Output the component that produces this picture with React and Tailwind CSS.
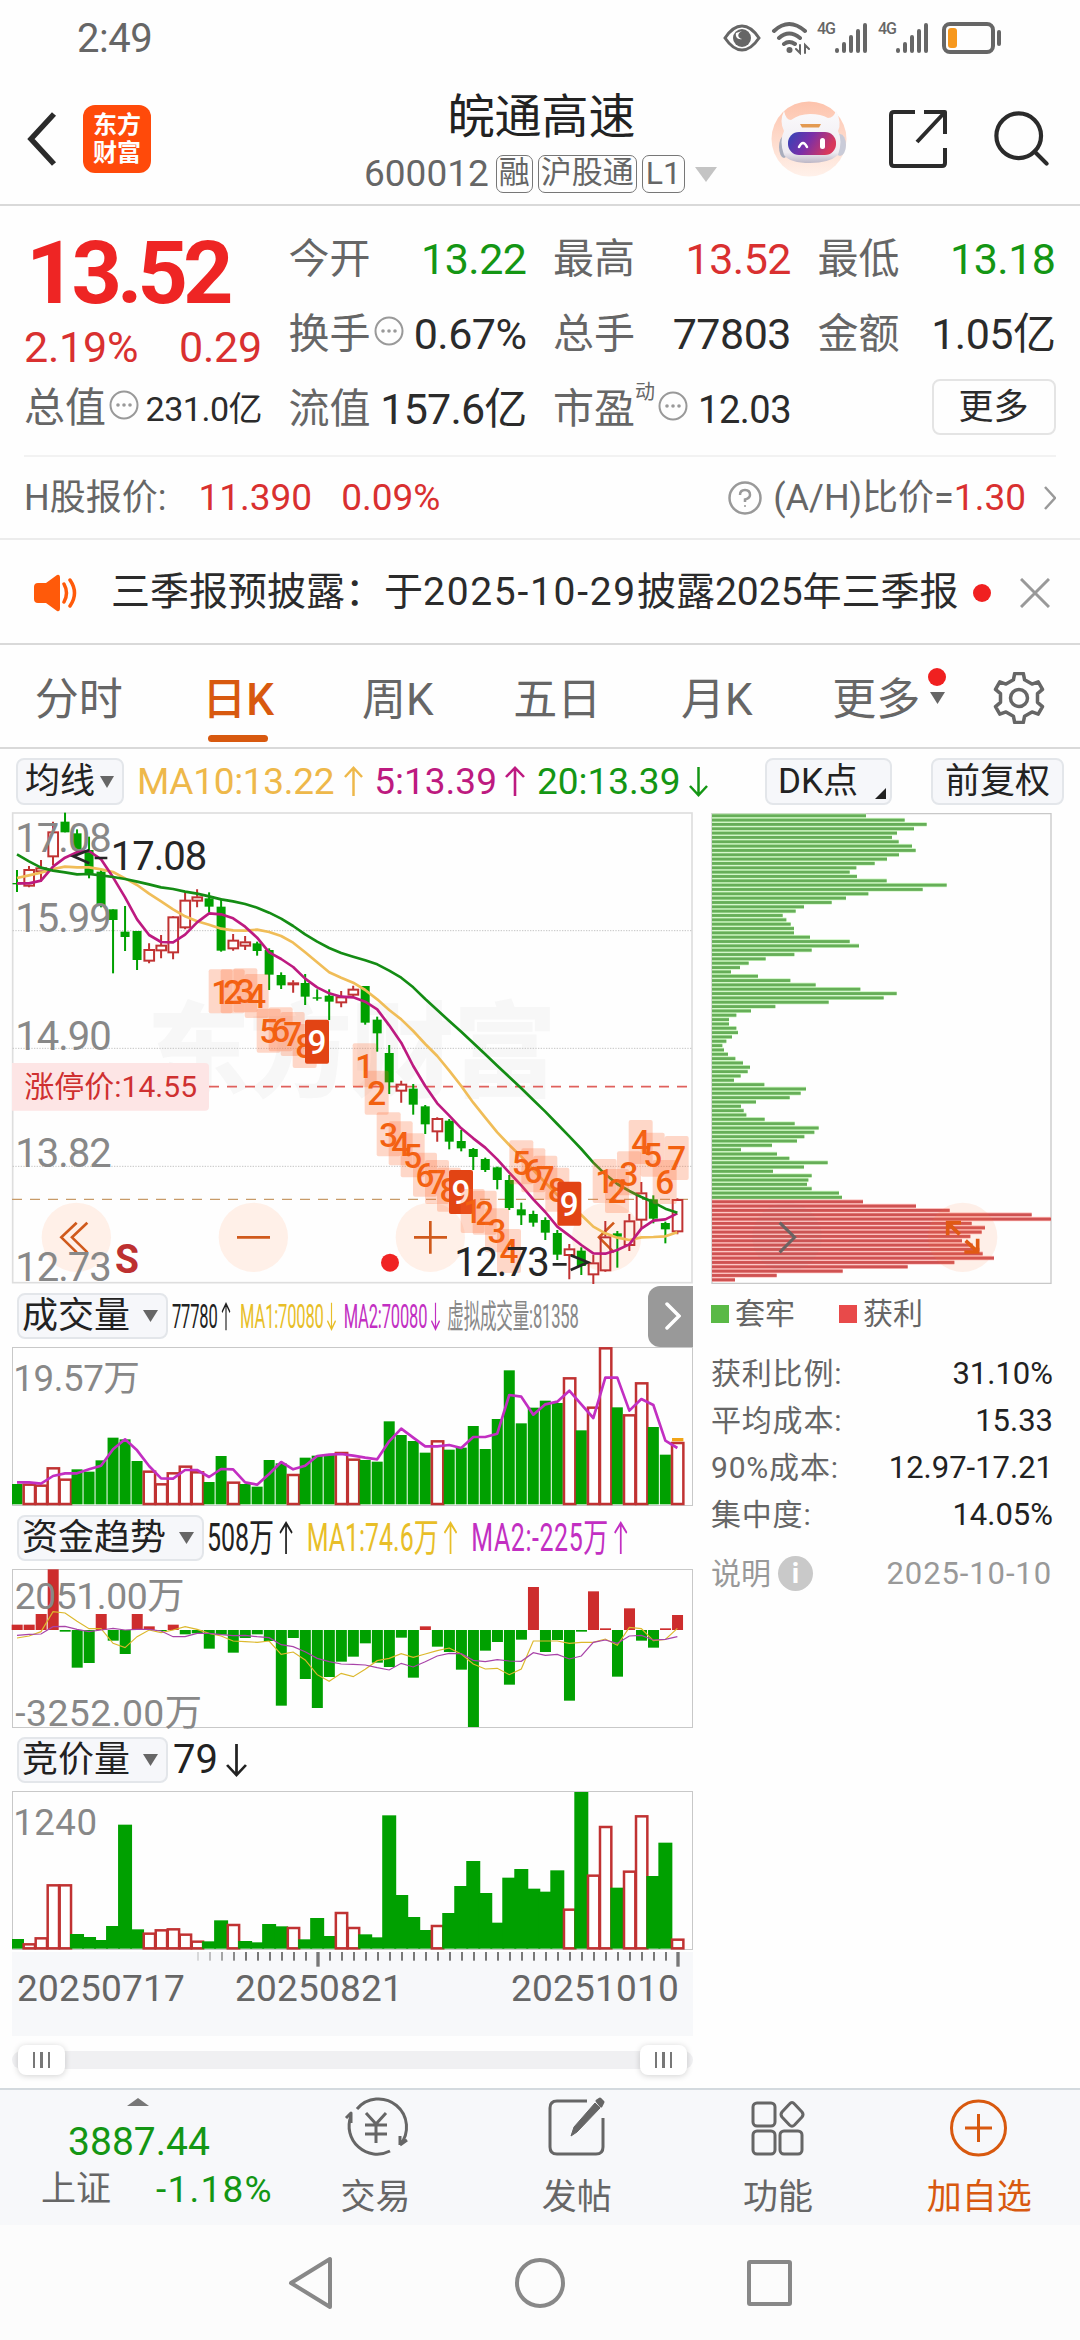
import { Search } from 'lucide-react'

const UP = '#c03232'
const DOWN = '#00a000'

// Chart units are a third of a pixel. One bar every 36 units, first at x = 51.
const barX = i => 51 + i * 36.02

// [direction, high, body top, body bottom, low]
const CANDLES = [
  ['g', 210, 249, 253, 276], ['r', 198, 208, 258, 262], ['r', 180, 203, 215, 245], ['r', 65, 95, 170, 195],
  ['g', 38, 65, 97, 97], ['g', 88, 100, 148, 160], ['g', 110, 150, 225, 235], ['g', 210, 215, 318, 322],
  ['g', 328, 328, 360, 520], ['g', 318, 395, 411, 453], ['g', 393, 393, 480, 510], ['r', 430, 448, 483, 490],
  ['r', 405, 435, 452, 475], ['r', 348, 350, 458, 478], ['r', 277, 300, 383, 388], ['r', 268, 290, 303, 322],
  ['g', 277, 295, 320, 338], ['g', 295, 320, 452, 455], ['r', 402, 420, 446, 452], ['r', 408, 425, 438, 450],
  ['g', 425, 430, 453, 467], ['g', 445, 450, 524, 570], ['g', 517, 525, 556, 567], ['r', 541, 548, 554, 578],
  ['g', 522, 549, 590, 615], ['g', 568, 592, 596, 602], ['g', 568, 587, 605, 660], ['r', 573, 590, 608, 622],
  ['r', 557, 567, 585, 590], ['g', 558, 558, 668, 674], ['g', 650, 659, 700, 755], ['g', 735, 759, 847, 882],
  ['r', 842, 852, 873, 908], ['g', 852, 866, 914, 944], ['g', 915, 919, 973, 1002], ['r', 952, 955, 995, 1025],
  ['g', 957, 962, 1025, 1048], ['g', 990, 1023, 1045, 1054], ['g', 1044, 1047, 1071, 1110], ['g', 1073, 1077, 1110, 1116],
  ['g', 1100, 1102, 1140, 1168], ['g', 1125, 1140, 1224, 1230], ['g', 1208, 1228, 1246, 1275], ['g', 1232, 1242, 1268, 1280],
  ['g', 1252, 1260, 1298, 1320], ['g', 1290, 1299, 1364, 1380], ['r', 1332, 1346, 1366, 1438], ['g', 1342, 1352, 1398, 1425],
  ['r', 1365, 1388, 1424, 1452], ['r', 1263, 1310, 1412, 1415], ['g', 1293, 1300, 1310, 1403], ['r', 1242, 1262, 1336, 1353],
  ['r', 1146, 1178, 1260, 1285], ['g', 1186, 1198, 1256, 1270], ['g', 1265, 1269, 1288, 1330], ['r', 1195, 1198, 1295, 1303],
]

const MA5 = [250, 250, 242, 200, 173, 157, 153, 178, 232, 292, 358, 405, 426, 427, 404, 367, 340, 343, 355, 380, 413, 457, 477, 501, 536, 562, 580, 590, 592, 605, 628, 676, 728, 798, 858, 910, 947, 985, 1015, 1043, 1078, 1118, 1156, 1198, 1236, 1280, 1307, 1335, 1360, 1361, 1350, 1333, 1286, 1262, 1258, 1240]
const MA10 = [234, 226, 218, 207, 200, 202, 202, 208, 216, 235, 255, 281, 304, 328, 349, 364, 374, 386, 391, 392, 389, 396, 408, 428, 457, 487, 517, 533, 548, 570, 598, 630, 658, 693, 732, 768, 812, 858, 908, 953, 997, 1035, 1070, 1110, 1148, 1185, 1215, 1245, 1280, 1300, 1313, 1320, 1312, 1311, 1309, 1297]
const MA20 = [163, 184, 203, 212, 217, 223, 222, 226, 231, 237, 245, 253, 262, 267, 275, 281, 289, 298, 304, 312, 323, 338, 356, 378, 403, 425, 444, 459, 470, 481, 493, 512, 533, 562, 597, 630, 663, 695, 729, 763, 797, 831, 865, 900, 935, 972, 1009, 1047, 1088, 1123, 1152, 1173, 1191, 1207, 1226, 1238]

// Nine-turn markers: [x, y, digit]
const MARKS = [
  [626, 508, 1], [662, 508, 2], [700, 505, 3], [734, 522, 4], [770, 626, 5], [806, 622, 6], [842, 636, 7], [878, 672, 8], [915, 659, 9],
  [1058, 730, 1], [1094, 812, 2], [1130, 937, 3], [1166, 964, 4], [1202, 1000, 5], [1239, 1058, 6], [1275, 1080, 7], [1311, 1103, 8], [1347, 1110, 9],
  [1382, 1167, 1], [1418, 1172, 2], [1455, 1225, 3], [1491, 1287, 4],
  [1528, 1021, 5], [1564, 1045, 6], [1600, 1067, 7], [1636, 1103, 8], [1672, 1145, 9],
  [1778, 1077, 1], [1815, 1107, 2], [1851, 1054, 3], [1886, 960, 4], [1922, 998, 5], [1958, 1080, 6], [1994, 1008, 7],
]

const VOLUME = [612, 612, 615, 563, 597, 568, 575, 541, 473, 478, 543, 573, 611, 578, 558, 575, 606, 528, 606, 612, 620, 540, 550, 583, 533, 527, 523, 517, 537, 540, 545, 424, 465, 483, 518, 482, 509, 503, 438, 507, 417, 271, 430, 383, 362, 369, 293, 451, 381, 203, 382, 404, 308, 441, 524, 487]
const VOLUME_DIRS = 'grrrrggggggrrrrrggrggggrgggrrggggggrggggggggggrgrrgrrggr'.split('')
const VOLUME_MA = [607, 607, 611, 588, 580, 580, 568, 557, 508, 478, 511, 558, 595, 596, 570, 570, 591, 567, 568, 607, 614, 582, 546, 568, 557, 528, 524, 522, 527, 533, 538, 484, 446, 473, 499, 499, 495, 504, 471, 471, 461, 345, 350, 404, 373, 365, 332, 373, 414, 293, 293, 392, 357, 375, 482, 504]

const FUNDS = [1034, 1034, 1002, 868, 1055, 1163, 1149, 1002, 1082, 1122, 1002, 1039, 1053, 1034, 1063, 1060, 1106, 1064, 1118, 1074, 1063, 1083, 1277, 1074, 1197, 1284, 1191, 1145, 1130, 1090, 1148, 1161, 1073, 1193, 1039, 1100, 1116, 1169, 1341, 1112, 1086, 1214, 1079, 921, 1116, 1080, 1262, 1055, 934, 1045, 1190, 985, 1082, 1103, 1045, 1005]
const FUNDS_MA1 = [1074, 1068, 1055, 995, 999, 1024, 1046, 1046, 1090, 1103, 1070, 1050, 1058, 1050, 1040, 1048, 1060, 1068, 1083, 1085, 1087, 1083, 1123, 1116, 1140, 1184, 1204, 1180, 1190, 1168, 1142, 1135, 1121, 1132, 1122, 1112, 1104, 1122, 1152, 1167, 1165, 1184, 1167, 1083, 1083, 1083, 1090, 1087, 1087, 1077, 1096, 1042, 1046, 1082, 1078, 1045]
const FUNDS_MA2 = [1066, 1063, 1062, 1040, 1039, 1048, 1055, 1050, 1045, 1050, 1048, 1048, 1053, 1070, 1070, 1060, 1060, 1064, 1067, 1066, 1070, 1073, 1094, 1100, 1115, 1135, 1145, 1152, 1153, 1155, 1163, 1170, 1150, 1161, 1145, 1128, 1120, 1121, 1141, 1145, 1139, 1143, 1144, 1118, 1126, 1123, 1137, 1128, 1087, 1080, 1090, 1068, 1066, 1080, 1078, 1070]

const AUCTION = [612, 626, 608, 449, 449, 597, 606, 615, 573, 269, 583, 594, 584, 581, 597, 618, 619, 556, 568, 618, 622, 567, 574, 577, 613, 549, 603, 532, 577, 598, 607, 241, 480, 546, 585, 571, 534, 453, 378, 474, 563, 428, 402, 461, 470, 406, 522, 171, 420, 274, 458, 408, 242, 423, 323, 612]

const TRAPPED = [495, 611, 677, 639, 588, 573, 593, 633, 644, 594, 558, 521, 466, 446, 468, 557, 737, 665, 502, 435, 392, 309, 284, 245, 256, 269, 279, 279, 327, 446, 474, 332, 280, 194, 143, 117, 90, 171, 268, 344, 478, 587, 548, 383, 223, 150, 106, 84, 84, 106, 111, 93, 76, 64, 69, 81, 103, 126, 147, 140, 119, 99, 190, 315, 299, 266, 165, 120, 128, 136, 191, 281, 353, 340, 310, 288, 213, 120, 228, 265, 380, 309, 216, 332, 322, 318, 332, 414, 423]
const PROFIT = [486, 645, 746, 992, 1050, 812, 852, 842, 808, 783, 815, 835, 845, 879, 760, 620, 425, 227, 102]

const toPoints = values => values.map((y, i) => `${barX(i)},${y}`).join(' ')

function Arrow({ down, className }) {
  return (
    <svg viewBox="0 0 20 34" preserveAspectRatio="none" className={className} fill="none" stroke="currentColor" strokeWidth="2.6">
      <path d={down ? 'M10 1V32M1 22L10 32L19 22' : 'M10 33V2M1 12L10 2L19 12'} />
    </svg>
  )
}

function Triangle({ className }) {
  return (
    <svg viewBox="0 0 14 12" preserveAspectRatio="none" className={className} fill="currentColor">
      <path d="M0 0H14L7 12Z" />
    </svg>
  )
}

function Signal() {
  return (
    <div className="flex">
      <span className="w-[17px] text-[16px] leading-[14px] font-medium tracking-[-1px]">4G</span>
      <svg viewBox="0 0 34 32" className="w-[34px] h-8" stroke="currentColor" strokeWidth="4" strokeLinecap="round">
        <path d="M3 29V28M10 29V22M17 29V15M24 29V9M31 29V3" />
      </svg>
    </div>
  )
}

function StatusBar() {
  return (
    <div className="h-[76px] flex items-center justify-between pl-[77px] pr-[79px] text-[#666]">
      <span className="text-[40px] leading-none tracking-[-0.5px] pt-0.5">2:49</span>
      <div className="flex items-center">
        <svg viewBox="0 0 38 28" className="w-[38px] h-7 mr-[10px]" fill="none" stroke="currentColor" strokeWidth="3">
          <path d="M2 14C8 5 13 2 19 2S30 5 36 14C30 23 25 26 19 26S8 23 2 14Z" />
          <circle cx="19" cy="14" r="9" fill="currentColor" stroke="none" />
          <path d="M19 7C14 9 14 14 19 15C15 16 12 13 13 9Z" fill="#fff" stroke="none" />
        </svg>
        <svg viewBox="0 0 40 34" className="w-10 h-[34px] mr-[6px]" fill="none" stroke="currentColor" strokeWidth="4" strokeLinecap="round">
          <path d="M3 10Q18 -4 34 10M8 17Q18 8 29 17M13 23Q18 19 24 23" />
          <circle cx="18.500" cy="29" r="3" fill="currentColor" stroke="none" />
          <path d="M29 24V32L25 28M34 32V24L38 28" strokeWidth="2" />
        </svg>
        <Signal />
        <div className="w-[10px]" />
        <Signal />
        <div className="ml-[13px] w-[53px] h-8 rounded-[8px] border-4 border-[#666] p-[2px]">
          <div className="w-[9px] h-full rounded-[3px] bg-[#f7981d]" />
        </div>
        <div className="ml-[2px] w-1 h-4 rounded-full bg-[#666]" />
      </div>
    </div>
  )
}

function Robot() {
  return (
    <svg viewBox="0 0 76 76" className="w-[76px] h-[76px]">
      <defs>
        <linearGradient id="halo" x1="0" y1="0" x2="0" y2="1">
          <stop offset="0" stopColor="#fdc3ac" />
          <stop offset="1" stopColor="#fff1ea" />
        </linearGradient>
        <linearGradient id="shell" x1="0" y1="0" x2="0" y2="1">
          <stop offset="0" stopColor="#fbfafc" />
          <stop offset="0.8" stopColor="#eeebf1" />
          <stop offset="1" stopColor="#bdb7c6" />
        </linearGradient>
        <linearGradient id="visor" x1="0" y1="0" x2="1" y2="0.3">
          <stop offset="0" stopColor="#2f45b8" />
          <stop offset="0.5" stopColor="#7a2fa8" />
          <stop offset="1" stopColor="#d8385c" />
        </linearGradient>
      </defs>
      <circle cx="38" cy="38" r="37.500" fill="url(#halo)" />
      <ellipse cx="13" cy="46" rx="5" ry="11" fill="#a9adbd" />
      <ellipse cx="69" cy="44" rx="6" ry="11" fill="#c9cbd8" />
      <path d="M13 10Q15 19 20 19Q28 13 39 13T57 17Q63 17 65 9Q71 22 67 30Q72 40 67 54Q58 62 39 62Q19 62 13 54Q8 40 13 30Q8 20 13 10Z" fill="url(#shell)" />
      <path d="M29 23H50L48 26.500H31Z" fill="#e39a52" />
      <rect x="17" y="31" width="48" height="23" rx="11" fill="url(#visor)" />
      <path d="M28 46Q32 38 36 46" fill="none" stroke="#fff" strokeWidth="2.5" strokeLinecap="round" />
      <rect x="49" y="37" width="5" height="11" rx="2.500" fill="#fff" />
    </svg>
  )
}

function Header() {
  return (
    <div className="h-[130px] flex border-b-2 border-[#d9d9d9]">
      <div className="w-[300px] flex items-center pl-[27px] pb-[3px]">
        <svg viewBox="0 0 30 54" className="w-[30px] h-[54px] mr-[26px]" fill="none" stroke="#2b2b2b" strokeWidth="5.500">
          <path d="M27 2L4 27L27 52" />
        </svg>
        <div className="w-[68px] h-[68px] rounded-[12px] bg-[#ff4a0a] text-white text-[24px] leading-[28px] font-bold flex flex-col items-center justify-center">
          <span>东方</span>
          <span>财富</span>
        </div>
      </div>
      <div className="flex-1 flex flex-col items-center pl-3">
        <h1 className="mt-[13px] text-[47px] leading-[56px] text-[#222]">皖通高速</h1>
        <div className="mt-[10px] flex items-center text-[#666] -ml-0.5">
          <span className="text-[37px] leading-[38px] mr-[7px]">600012</span>
          <span className="h-[38px] px-[2px] text-[31px] leading-[34px] border-[1.500px] border-[#777] rounded-[7px] mr-[5px]">融</span>
          <span className="h-[38px] px-[2px] text-[31px] leading-[34px] border-[1.500px] border-[#777] rounded-[7px] mr-[5px]">沪股通</span>
          <span className="h-[38px] px-[3px] text-[32px] leading-[34px] border-[1.500px] border-[#777] rounded-[7px] mr-[10px]">L1</span>
          <Triangle className="w-[22px] h-[15px] text-[#c4c4c4]" />
        </div>
      </div>
      <div className="w-[309px] flex items-center pb-[3px]">
        <Robot />
        <svg viewBox="0 0 58 60" className="w-[58px] h-[60px] ml-[42px]" fill="none" stroke="#2b2b2b" strokeWidth="4" strokeLinejoin="round">
          <path d="M26 3H5Q2 3 2 6V54Q2 57 5 57H53Q56 57 56 54V39M35 3H56V25M56 3L28 33" />
        </svg>
        <Search className="w-[67px] h-[69px] ml-[41px] text-[#2b2b2b]" strokeWidth={1.5} />
      </div>
    </div>
  )
}

function More() {
  return (
    <svg viewBox="0 0 30 30" className="w-[30px] h-[30px] shrink-0 mb-2 ml-[3px]" fill="#999">
      <circle cx="15" cy="15" r="13.500" fill="none" stroke="#999" strokeWidth="2" />
      <circle cx="9" cy="15" r="1.800" />
      <circle cx="15" cy="15" r="1.800" />
      <circle cx="21" cy="15" r="1.800" />
    </svg>
  )
}

function Field({ label, more, sup, value, tone = 'text-[#2b2b2b]', size = 'text-[43px] tracking-[-0.5px]' }) {
  return (
    <div className="h-[75px] flex items-center">
      <span className="text-[41px] text-[#666]">{label}</span>
      {sup && <span className="text-[20px] text-[#666] mb-9">{sup}</span>}
      {more && <More />}
      <span className={`ml-auto ${size} ${tone}`}>{value}</span>
    </div>
  )
}

function Quote() {
  return (
    <div className="h-[249px] mx-6 pt-4 grid grid-cols-[238px_238px_238px_238px] gap-x-[26.500px] leading-none whitespace-nowrap">
      <div>
        <div className="h-[101px] flex items-center pl-0.5">
          <span className="text-[88px] font-bold text-[#ee2524] tracking-[-5px]">13.52</span>
        </div>
        <div className="h-12 flex items-center justify-between text-[43px] tracking-[-0.2px] text-[#d93030]">
          <span>2.19%</span>
          <span>0.29</span>
        </div>
        <Field label="总值" more value="231.0亿" size="text-[34px] tracking-[-0.5px]" />
      </div>
      <div>
        <Field label="今开" value="13.22" tone="text-[#149614]" />
        <Field label="换手" more value="0.67%" />
        <Field label="流值" value="157.6亿" size="text-[43px] tracking-[-0.8px]" />
      </div>
      <div>
        <Field label="最高" value="13.52" tone="text-[#d93030]" />
        <Field label="总手" value="77803" />
        <Field label="市盈" sup="动" more value="12.03" size="text-[38px] tracking-[-0.5px]" />
      </div>
      <div>
        <Field label="最低" value="13.18" tone="text-[#149614]" />
        <Field label="金额" value="1.05亿" />
        <div className="h-[70px] flex items-center justify-end">
          <button className="w-[124px] h-[56px] border-2 border-[#e4e4e4] rounded-[8px] text-[35px] text-[#2b2b2b]">更多</button>
        </div>
      </div>
    </div>
  )
}

function HShare() {
  return (
    <div className="h-[85px] border-b-2 border-[#ececec] px-6">
      <div className="h-full border-t-2 border-[#f2f2f2] flex items-center text-[36px] leading-none text-[#666] whitespace-nowrap">
        <span>H股报价:</span>
        <span className="ml-[32px] text-[37px] text-[#d93030]">11.390</span>
        <span className="ml-[29px] text-[37px] text-[#d93030]">0.09%</span>
        <svg viewBox="0 0 34 34" className="ml-auto w-[34px] h-[34px] mr-[11px]" fill="none" stroke="#999" strokeWidth="2.500">
          <circle cx="17" cy="17" r="15.500" />
          <path d="M12 14Q12 9 17 9T22 14Q22 17 17 18.500V21" />
          <circle cx="17" cy="25" r="1" fill="#999" stroke="none" />
        </svg>
        <span>(A/H)比价=</span>
        <span className="text-[37px] text-[#d93030]">1.30</span>
        <svg viewBox="0 0 12 24" className="ml-[18px] w-3 h-6" fill="none" stroke="#999" strokeWidth="2.500">
          <path d="M1 1L11 12L1 23" />
        </svg>
      </div>
    </div>
  )
}

function Notice() {
  return (
    <div className="h-[105px] border-b-2 border-[#d9d9d9] flex items-center pt-0.5 pl-[33px] pr-[30px] text-[39px] leading-none text-[#2b2b2b] whitespace-nowrap">
      <svg viewBox="0 0 46 38" className="w-[46px] h-[38px] mr-[32px]" fill="#ff5a0a">
        <path d="M5 9H13L24 1Q27 0 27 4V34Q27 38 24 37L13 29H5Q1 29 1 25V13Q1 9 5 9Z" />
        <path d="M31 10Q36 19 31 28M37 6Q46 19 37 32" fill="none" stroke="#ff5a0a" strokeWidth="3.500" strokeLinecap="round" />
      </svg>
      <span>三季报预披露：于<span className="tracking-[1.700px]">2025-10-29</span>披露2025年三季报</span>
      <span className="ml-[14px] w-[18px] h-[18px] rounded-full bg-[#f02020]" />
      <svg viewBox="0 0 30 30" className="ml-auto w-[30px] h-[30px]" stroke="#999" strokeWidth="3">
        <path d="M1 1L29 29M29 1L1 29" />
      </svg>
    </div>
  )
}

const TABS = ['分时', '日K', '周K', '五日', '月K', '更多']

// Six-toothed outline built from alternating radii
const GEAR = Array.from({ length: 24 }, (_, i) => {
  const tooth = i % 4 < 2
  const r = tooth ? 25 : 19
  const spread = tooth ? 10 : 13
  const a = ((Math.floor(i / 2) * 30 + (i % 2 ? spread : -spread) - 90) * Math.PI) / 180
  return `${(26 + r * Math.cos(a)).toFixed(1)},${(26 + r * Math.sin(a)).toFixed(1)}`
}).join(' ')

function Tabs() {
  return (
    <div className="h-[104px] border-b-2 border-[#d9d9d9] flex text-[44px] leading-none text-[#666]">
      {TABS.map((tab, i) => (
        <div key={tab} className={`relative w-[159.500px] flex items-center justify-center pt-[7px] pr-0.5 ${i === 1 ? 'text-[#d8590f] font-medium' : ''}`}>
          {tab}
          {i === 1 && <span className="absolute bottom-[5px] w-[60px] h-[7px] rounded-full bg-[#d8590f]" />}
          {i === 5 && (
            <>
              <span className="absolute top-[23px] left-[130px] w-[18px] h-[18px] rounded-full bg-[#f02020]" />
              <Triangle className="absolute top-[47px] left-[132px] w-[15px] h-[12px]" />
            </>
          )}
        </div>
      ))}
      <div className="flex-1 flex items-center justify-center pt-[3px]">
        <svg viewBox="0 0 52 52" className="w-[52px] h-[52px]" fill="none" stroke="#666" strokeWidth="3.500" strokeLinejoin="round">
          <polygon points={GEAR} />
          <circle cx="26" cy="26" r="8.500" />
        </svg>
      </div>
    </div>
  )
}

function Indicators() {
  return (
    <div className="h-[63px] pt-[9px] pl-4 pr-4 flex items-start text-[37px] leading-[46px] whitespace-nowrap">
      <button className="w-[108px] h-[47px] shrink-0 bg-[#f6f7fa] border-2 border-[#e3e6ea] rounded-[8px] flex items-center gap-[5px] pl-[7px] text-[35px] text-[#222]">
        均线<Triangle className="w-[14px] h-[12px] text-[#666]" />
      </button>
      <div className="ml-[13px] h-[47px] flex items-center">
        <span className="text-[#eeb84a] tracking-[-0.3px]">MA10:13.22</span>
        <Arrow className="w-[19px] h-[31px] ml-[10px] text-[#eeb84a]" />
        <span className="ml-[11px] text-[#bd1a80]">5:13.39</span>
        <Arrow className="w-[20px] h-[31px] ml-[8px] text-[#bd1a80]" />
        <span className="ml-[12px] text-[#149614]">20:13.39</span>
        <Arrow down className="w-[19px] h-[31px] ml-[9px] text-[#149614]" />
      </div>
      <button className="relative ml-auto w-[127px] h-[47px] bg-[#f6f7fa] border-2 border-[#e3e6ea] rounded-[8px] text-[35px] text-left pl-[11px] text-[#222] leading-[43px]">
        DK点
        <svg viewBox="0 0 11 11" className="absolute right-1 bottom-1 w-[11px] h-[11px]"><path d="M11 0V11H0Z" fill="#222" /></svg>
      </button>
      <button className="ml-[39px] w-[133px] h-[47px] bg-[#f6f7fa] border-2 border-[#e3e6ea] rounded-[8px] text-[35px] text-[#222] leading-[43px]">前复权</button>
    </div>
  )
}

function CandleChart() {
  return (
    <svg viewBox="36 36 2043 1416" className="block w-[681px] h-[472px] overflow-visible">
      <text x="440" y="868" fontSize="310" fontWeight="900" fill="#f7f7f7" textLength="1230">东方财富</text>
      <rect x="38" y="39" width="2038" height="1409" fill="none" stroke="#dedede" strokeWidth="5" />
      <g stroke="#c4c4c4" strokeWidth="3" strokeDasharray="4 4">
        <path d="M38 392H2076M38 745H2076M38 1099H2076" />
      </g>

      {/* Limit-up price */}
      <path d="M627 860H2064" stroke="#e0605c" strokeWidth="5" strokeDasharray="30 24" />
      <path d="M36 789H615Q627 789 627 801V920Q627 932 615 932H36Z" fill="#fde5e5" />
      <text x="73" y="892" fontSize="90" fill="#cf3030" textLength="518">涨停价:14.55</text>
      <path d="M36 1198H2064" stroke="#c79a68" strokeWidth="4" strokeDasharray="30 24" />

      <g fill="#fff0e8">
        <circle cx="229" cy="1312" r="104" />
        <circle cx="760" cy="1312" r="104" />
        <circle cx="1291" cy="1312" r="104" />
        <circle cx="1820" cy="1312" r="104" />
      </g>
      <g stroke="#d05a1c" strokeWidth="8" fill="none">
        <path d="M230 1268L184 1312L230 1357M262 1268L216 1312L262 1357" />
        <path d="M711 1312H810" />
        <path d="M1242 1312H1341M1291 1263V1361" />
        <path d="M1842 1268L1797 1312L1842 1357" />
      </g>

      {CANDLES.map(([dir, high, top, bottom, low], i) => {
        const x = barX(i)
        if (dir === 'g') {
          return (
            <g key={i} fill={DOWN}>
              <rect x={x - 3} y={high} width="6" height={low - high} />
              <rect x={x - 13.5} y={top} width="27" height={bottom - top} />
            </g>
          )
        }
        return (
          <g key={i} stroke={UP} strokeWidth="6" fill="none">
            <path d={`M${x} ${high}V${top}M${x} ${bottom}V${low}`} />
            <rect x={x - 14} y={top + 2} width="29" height={bottom - top - 3} />
          </g>
        )
      })}

      <g fontSize="120" fill="#888">
        <text x="46" y="155" textLength="289">17.08</text>
        <text x="46" y="395" textLength="289">15.99</text>
        <text x="46" y="749" textLength="289">14.90</text>
        <text x="46" y="1101" textLength="289">13.82</text>
        <text x="46" y="1444" textLength="289">12.73</text>
      </g>

      <g fill="none" strokeWidth="8" strokeLinejoin="round">
        <polyline points={toPoints(MA10)} stroke="#f0bd58" />
        <polyline points={toPoints(MA5)} stroke="#bd1a80" />
        <polyline points={toPoints(MA20)} stroke="#148c14" />
      </g>

      {MARKS.map(([x, y, n]) => (
        <g key={`${x}-${y}`}>
          <rect x={x} y={y} width="72" height="132" rx="6" fill={n === 9 ? '#e24414' : '#ff6a30'} fillOpacity={n === 9 ? 1 : 0.26} />
          <text x={x + 36} y={y + 103} fontSize="100" fontWeight="500" textAnchor="middle" fill={n === 9 ? '#fff' : '#f2600f'}>{n}</text>
        </g>
      ))}

      <g fontSize="120" fill="#262626">
        <path d="M268 150L220 169L268 190M284 174H322" fill="none" stroke="#262626" strokeWidth="8" />
        <text x="332" y="210" textLength="290">17.08</text>
        <text x="1363" y="1428" textLength="286">12.73</text>
        <path d="M1658 1393H1700M1712 1366L1764 1387L1712 1410" fill="none" stroke="#262626" strokeWidth="8" />
      </g>
      <text x="345" y="1418" fontSize="122" fontWeight="700" fill="#bd3030" textLength="72" lengthAdjust="spacingAndGlyphs">S</text>
      <circle cx="1170" cy="1388" r="27" fill="#f02424" />
    </svg>
  )
}

function ReadoutRow({ label, wide, children }) {
  return (
    <div className="h-[64px] flex items-center pl-[5px] whitespace-nowrap leading-none">
      <button className={`${wide ? 'w-[187px]' : 'w-[151px]'} h-[46px] shrink-0 bg-[#f6f7fa] border-2 border-[#e3e6ea] rounded-[8px] flex items-center justify-between pl-[3px] pr-2 text-[36px] text-[#222]`}>
        {label}
        <Triangle className="w-[15px] h-[12px] text-[#666]" />
      </button>
      {children}
    </div>
  )
}

function Bars({ values, dirs, base, width }) {
  return values.map((top, i) =>
    dirs[i] === 'g' ? (
      <rect key={i} x={barX(i) - width / 2} y={top} width={width} height={base - top} fill={DOWN} />
    ) : (
      <rect key={i} x={barX(i) - 16} y={top + 2} width="34" height={base - top - 3} fill="#fff" stroke={UP} strokeWidth="7.500" />
    )
  )
}

function VolumeChart() {
  return (
    <svg viewBox="36 201 2043 477" className="block w-[681px] h-[159px]">
      <rect x="37.500" y="202.500" width="2040" height="474" fill="none" stroke="#c8c8c8" strokeWidth="3" />
      <Bars values={VOLUME} dirs={VOLUME_DIRS} base={673} width={33} />
      <rect x={barX(55) - 16} y="474" width="34" height="10" fill="#f2a516" />
      <polyline points={toPoints(VOLUME_MA)} fill="none" stroke="#c22fc2" strokeWidth="8" strokeLinejoin="round" />
      <text x="40" y="332" fontSize="110" fill="#888" textLength="380">19.57万</text>
    </svg>
  )
}

function FundsChart() {
  return (
    <svg viewBox="36 867 2043 477" className="block w-[681px] h-[159px] overflow-visible">
      <rect x="37.500" y="868.500" width="2040" height="474" fill="none" stroke="#c8c8c8" strokeWidth="3" />
      {FUNDS.map((y, i) => (
        <rect key={i} x={barX(i) - 16} y={Math.min(y, 1050)} width="33" height={Math.abs(y - 1050)} fill={y < 1050 ? '#cd2d2d' : DOWN} />
      ))}
      <polyline points={toPoints(FUNDS_MA1)} fill="none" stroke="#dcb82c" strokeWidth="3.500" />
      <polyline points={toPoints(FUNDS_MA2)} fill="none" stroke="#a843a8" strokeWidth="3.500" />
      <g fontSize="112" fill="#888">
        <text x="44" y="986" textLength="510">2051.00万</text>
        <text x="46" y="1337" textLength="560">-3252.00万</text>
      </g>
    </svg>
  )
}

function AuctionChart() {
  return (
    <svg viewBox="36 168 2043 477" className="block w-[681px] h-[159px]">
      <rect x="37.500" y="169.500" width="2040" height="474" fill="none" stroke="#c8c8c8" strokeWidth="3" />
      <Bars values={AUCTION} dirs={VOLUME_DIRS} base={641} width={42} />
      <text x="40" y="299" fontSize="110" fill="#888" textLength="251">1240</text>
    </svg>
  )
}

function TimeAxis() {
  return (
    <div className="mt-0.5 h-[84px] w-[681px] bg-[#f7f8fa]">
      <svg viewBox="36 0 2043 48" className="block w-[681px] h-4">
        {Array.from({ length: 41 }, (_, i) => {
          const major = i === 10 || i === 40
          return (
            <rect key={i} x={594 + i * 36 - (major ? 5 : 3)} y="0" width={major ? 10 : 6} height={major ? 44 : 26} fill="#777" opacity={i < 4 ? 0.25 + i * 0.2 : 1} />
          )
        })}
      </svg>
      <div className="flex text-[37px] leading-none pt-[2px] pl-[5px] pr-[14px] text-[#666] tracking-[0.2px]">
        <span>20250717</span>
        <span className="ml-[50px]">20250821</span>
        <span className="ml-auto">20251010</span>
      </div>
    </div>
  )
}

function Handle() {
  return (
    <span className="w-[47px] h-[30px] rounded-[8px] bg-white shadow-[0_1px_6px_rgba(0,0,0,0.18)] flex items-center justify-center gap-[5px]">
      <i className="w-[2.500px] h-4 bg-[#777]" />
      <i className="w-[2.500px] h-4 bg-[#777]" />
      <i className="w-[2.500px] h-4 bg-[#777]" />
    </span>
  )
}

function Chips() {
  return (
    <svg viewBox="30 36 1023 1416" className="block w-[341px] h-[472px]">
      <path d="M33 41H1050V1450H33Z" fill="none" stroke="#c8c8c8" strokeWidth="4" />
      {TRAPPED.map((right, i) => (
        <g key={i}>
          <rect x="33" y={40.5 + i * 13.01} width={right - 33} height="13" fill="#c9f5bd" />
          <rect x="33" y={43 + i * 13.01} width={right - 33} height="8.500" fill="#66ae58" />
        </g>
      ))}
      {PROFIT.map((right, i) => (
        <g key={i}>
          <rect x="33" y={1198.5 + i * 13.01} width={right - 33} height="13" fill="#fbb5b2" />
          <rect x="33" y={1201 + i * 13.01} width={right - 33} height="8.500" fill="#cf5252" />
        </g>
      ))}
      <circle cx="258" cy="1312" r="104" fill="#888" fillOpacity="0.05" />
      <circle cx="785" cy="1312" r="104" fill="#ff7a3a" fillOpacity="0.11" />
      <path d="M236 1268L281 1312L236 1357" fill="none" stroke="#6b6363" strokeWidth="9" />
      <path d="M740 1306V1268H780M742 1270L776 1303M794 1322L830 1356M830 1316V1356H790" fill="none" stroke="#e05a14" strokeWidth="11" />
    </svg>
  )
}

const STATS = [
  ['获利比例:', '31.10%'],
  ['平均成本:', '15.33'],
  ['90%成本:', '12.97-17.21'],
  ['集中度:', '14.05%'],
]

function ChipPanel() {
  return (
    <div className="ml-[18px] w-[341px] leading-none">
      <Chips />
      <div className="h-[60px] flex items-center text-[30px] text-[#666]">
        <i className="w-[18px] h-[18px] bg-[#5ab946] mr-[6px]" />套牢
        <i className="ml-[44px] w-[18px] h-[18px] bg-[#e84a4a] mr-[6px]" />获利
      </div>
      <div className="pt-[6px]">
        {STATS.map(([label, value]) => (
          <div key={label} className="h-[47px] flex items-center justify-between text-[30px] text-[#666]">
            <span className="tracking-[0.800px]">{label}</span>
            <span className="text-[31px] text-[#222] -mr-px">{value}</span>
          </div>
        ))}
      </div>
      <div className="mt-[17px] h-[37px] flex items-center text-[30px] text-[#999]">
        说明
        <span className="ml-[7px] w-[35px] h-[35px] rounded-full bg-[#c9c9c9] text-white text-[28px] font-bold leading-[35px] text-center">i</span>
        <span className="ml-auto text-[31px] tracking-[0.900px]">2025-10-10</span>
      </div>
    </div>
  )
}

const ICONS = {
  交易: (
    <>
      <path d="M14 13A28 28 0 0 1 57 49M47 55A28 28 0 0 1 8 20M3 22L8 17V27M57 49V40M57 49L64 44" />
      <path d="M23 17L33 28L43 17M33 28V47M22 29H44M22 38H44" />
    </>
  ),
  发帖: (
    <>
      <path d="M43 5H13Q6 5 6 12V51Q6 58 13 58H52Q59 58 59 51V22" />
      <path d="M27 40L30 31L51 7L56 12L33 36Z" fill="currentColor" strokeWidth="1" />
      <path d="M53 5L56 3L59 6L57 10Z" fill="currentColor" />
    </>
  ),
  功能: (
    <>
      <rect x="8" y="7" width="22" height="23" rx="4" />
      <rect x="8" y="35" width="22" height="23" rx="4" />
      <rect x="35" y="35" width="22" height="23" rx="4" />
      <path d="M44.500 8Q47 5 49.500 8L57 16Q59 18.500 57 21L49.500 29Q47 31.500 44.500 29L37 21Q35 18.500 37 16Z" />
    </>
  ),
  加自选: (
    <>
      <circle cx="32.500" cy="32" r="27" />
      <path d="M19 32H46M32.500 18V46" />
    </>
  ),
}

function BottomBar() {
  return (
    <div className="h-[137px] border-t-2 border-[#d3d9de] bg-[#f7f8fa] flex leading-none text-[#666]">
      <div className="w-[275px] flex flex-col">
        <svg viewBox="0 0 22 8" className="mt-[8px] ml-[127px] w-[22px] h-2" fill="#777"><path d="M11 0L22 8H0Z" /></svg>
        <span className="mt-[15px] w-[278px] text-center text-[39px] h-[42px] leading-[42px] text-[#149614]">3887.44</span>
        <div className="mt-[8px] flex items-center pl-[41px]">
          <span className="text-[35px]">上证</span>
          <span className="ml-[45px] text-[37px] tracking-[1.200px] text-[#149614]">-1.18%</span>
        </div>
      </div>
      {Object.entries(ICONS).map(([name, icon]) => (
        <div key={name} className={`w-[201.250px] flex flex-col items-center pt-[6px] ${name === '加自选' ? 'text-[#d8590f]' : ''}`}>
          <svg viewBox="0 0 66 64" className="w-[66px] h-[64px]" fill="none" stroke="currentColor" strokeWidth="3" strokeLinejoin="round">{icon}</svg>
          <span className="mt-[20px] text-[35px]">{name}</span>
        </div>
      ))}
    </div>
  )
}

function SystemNav() {
  return (
    <div className="h-[116px] bg-[#fcfcfc] flex items-center justify-center">
      <svg viewBox="0 0 504 54" className="w-[504px] h-[54px]" fill="none" stroke="#888" strokeWidth="4" strokeLinejoin="round">
        <path d="M42 3V51L3 27Z" />
        <circle cx="252" cy="27" r="23" />
        <rect x="461" y="6" width="41" height="42" rx="1" />
      </svg>
    </div>
  )
}

export default function App() {
  return (
    <div className="w-[1080px] h-[2340px] overflow-hidden bg-[#fefefe] font-['Roboto','Noto_Sans_CJK_SC',sans-serif]">
      <StatusBar />
      <Header />
      <Quote />
      <HShare />
      <Notice />
      <Tabs />
      <Indicators />
      <div className="h-[1276px] flex pl-3">
        <div className="w-[681px]">
          <CandleChart />
          <ReadoutRow label="成交量">
            <div className="w-[476px] flex">
              <div className="ml-[4px] flex items-center origin-left scale-x-50 text-[33px] tracking-[-0.300px]">
                <span className="text-[#222]">77780</span>
                <Arrow className="w-[18px] h-[29px] ml-2 text-[#222]" />
                <span className="ml-[19px] text-[#e8be28]">MA1:70080</span>
                <Arrow down className="w-[18px] h-[29px] ml-[7px] text-[#e8be28]" />
                <span className="ml-[15px] text-[#c22fc2]">MA2:70080</span>
                <Arrow down className="w-[18px] h-[29px] ml-[7px] text-[#c22fc2]" />
                <span className="ml-[15px] text-[#888]">虚拟成交量:81358</span>
              </div>
            </div>
            <div className="ml-auto w-[45px] h-[61px] shrink-0 rounded-l-[12px] bg-[#999] flex items-center justify-center">
              <svg viewBox="0 0 16 28" className="w-4 h-7 ml-1" fill="none" stroke="#fff" strokeWidth="3.500" strokeLinecap="round">
                <path d="M2 2L14 14L2 26" />
              </svg>
            </div>
          </ReadoutRow>
          <div className="-mt-px"><VolumeChart /></div>
          <ReadoutRow label="资金趋势" wide>
            <div className="ml-[3px] flex items-center origin-left scale-x-[0.64] text-[39px]">
              <span className="text-[#222]">508万</span>
              <Arrow className="w-[21px] h-[34px] ml-2 text-[#222]" />
              <span className="ml-[22px] text-[#e8be28]">MA1:74.6万</span>
              <Arrow className="w-[21px] h-[34px] ml-2 text-[#e8be28]" />
              <span className="ml-[22px] text-[#c22fc2] tracking-[0.9px]">MA2:-225万</span>
              <Arrow className="w-[21px] h-[34px] ml-2 text-[#c22fc2]" />
            </div>
          </ReadoutRow>
          <div className="-mt-px"><FundsChart /></div>
          <ReadoutRow label="竞价量">
            <span className="ml-[5px] text-[40px] text-[#222]">79</span>
            <Arrow down className="w-[21px] h-[34px] ml-2 text-[#222]" />
          </ReadoutRow>
          <div className="-mt-px"><AuctionChart /></div>
          <TimeAxis />
          <div className="mt-[15px] h-[18px] rounded-full bg-[#f0f0f2] flex items-center justify-between px-[6px]">
            <Handle />
            <Handle />
          </div>
        </div>
        <ChipPanel />
      </div>
      <BottomBar />
      <SystemNav />
    </div>
  )
}
